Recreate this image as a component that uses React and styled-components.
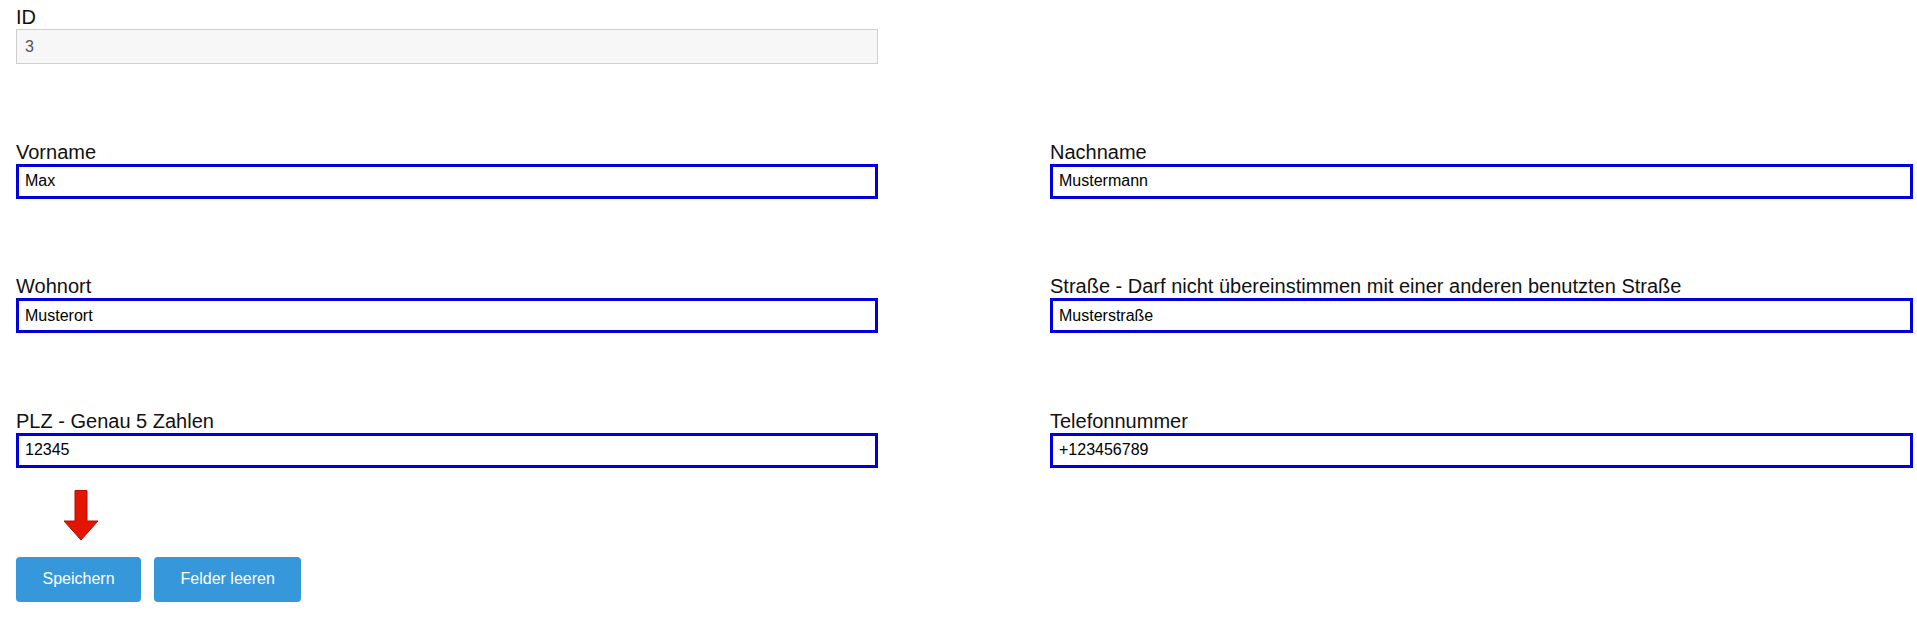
import React from 'react';
import styled, { createGlobalStyle } from 'styled-components';

const GlobalStyle = createGlobalStyle`
  html, body {
    margin: 0;
    padding: 0;
    background: #ffffff;
  }
  body {
    font-family: "Liberation Sans", Arial, sans-serif;
    color: #111;
  }
`;

const Page = styled.form`
  padding: 5px 0 0 16px;
`;

const Grid = styled.div`
  display: grid;
  grid-template-columns: 862px 863px;
  column-gap: 172px;
  row-gap: 75.5px;
`;

const Field = styled.div`
  display: flex;
  flex-direction: column;
`;

const Label = styled.label`
  font-size: 20px;
  line-height: 24px;
  color: #111;
`;

const Input = styled.input`
  box-sizing: border-box;
  height: 35px;
  width: 100%;
  margin: 0;
  font-family: "Liberation Sans", Arial, sans-serif;
  font-size: 16px;
  color: ${p => (p.disabled ? '#555' : '#000')};
  background: ${p => (p.disabled ? '#f7f7f7' : '#fff')};
  border: ${p => (p.disabled ? '1px solid #cfcfcf' : '3px solid #0000dd')};
  padding: ${p => (p.disabled ? '0 8px' : '0 6px')};
  outline: none;
`;

const ArrowWrap = styled.div`
  margin: 22px 0 0 47px;
  height: 51px;
`;

const Actions = styled.div`
  display: flex;
  gap: 13px;
  margin-top: 16px;
`;

const Button = styled.button`
  height: 45px;
  padding: 0 26.5px;
  border: none;
  border-radius: 4px;
  background: #3698da;
  color: #fff;
  font-family: "Liberation Sans", Arial, sans-serif;
  font-size: 16px;
  cursor: pointer;
`;

const fields = [
  { label: 'Vorname', value: 'Max' },
  { label: 'Nachname', value: 'Mustermann' },
  { label: 'Wohnort', value: 'Musterort' },
  { label: 'Straße - Darf nicht übereinstimmen mit einer anderen benutzten Straße', value: 'Musterstraße' },
  { label: 'PLZ - Genau 5 Zahlen', value: '12345' },
  { label: 'Telefonnummer', value: '+123456789' },
];

const DownArrow = () => (
  <svg width="36" height="51" viewBox="0 0 36 51">
    <polygon
      points="12,0.5 24,0.5 24,31 35,31 18,50 1,31 12,31"
      fill="#e31400"
      stroke="#b01000"
      strokeWidth="1"
    />
  </svg>
);

const App = () => {
  return (
    <>
      <GlobalStyle />
      <Page onSubmit={e => e.preventDefault()}>
        <Grid>
          <Field>
            <Label>ID</Label>
            <Input disabled defaultValue="3" />
          </Field>
          <div />
          {fields.map(f => (
            <Field key={f.label}>
              <Label>{f.label}</Label>
              <Input defaultValue={f.value} />
            </Field>
          ))}
        </Grid>
        <ArrowWrap>
          <DownArrow />
        </ArrowWrap>
        <Actions>
          <Button type="submit">Speichern</Button>
          <Button type="button">Felder leeren</Button>
        </Actions>
      </Page>
    </>
  );
};

export default App;
